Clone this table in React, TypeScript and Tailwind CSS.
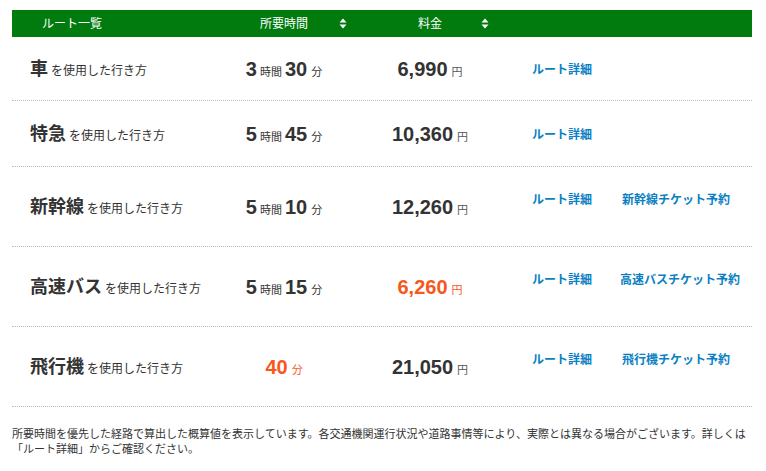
import React from "react";

type Route = {
  id: number;
  name: string;
  hours?: number;
  minutes: number;
  price: string;
  fastest?: boolean;
  cheapest?: boolean;
  ticket?: string;
  height: string;
};

const routes: Route[] = [
  { id: 1, name: "車", hours: 3, minutes: 30, price: "6,990", height: "h-[64px]" },
  { id: 2, name: "特急", hours: 5, minutes: 45, price: "10,360", height: "h-[66px]" },
  { id: 3, name: "新幹線", hours: 5, minutes: 10, price: "12,260", ticket: "新幹線チケット予約", height: "h-[80px]" },
  { id: 4, name: "高速バス", hours: 5, minutes: 15, price: "6,260", cheapest: true, ticket: "高速バスチケット予約", height: "h-[80px]" },
  { id: 5, name: "飛行機", minutes: 40, price: "21,050", fastest: true, ticket: "飛行機チケット予約", height: "h-[80px]" },
];

const SortIcon = () => (
  <svg width="8" height="11" viewBox="0 0 8 11" fill="white">
    <path d="M4 0.5 L7.5 4.5 L0.5 4.5 Z" />
    <path d="M0.5 6.5 L7.5 6.5 L4 10.5 Z" />
  </svg>
);

const App = () => {
  return (
    <div
      className="w-[766px] h-[471px] bg-white text-[#333] pt-[10px] px-[12px]"
      style={{ fontFamily: '"Liberation Sans", "Noto Sans CJK JP", sans-serif' }}
    >
      <div className="w-[740px]">
        <div className="grid grid-cols-[200px_144px_148px_116px_112px_20px] h-[27px] bg-[#017a0e] text-white text-[12px] leading-none items-center">
          <div className="pl-[30px]">ルート一覧</div>
          <div className="relative flex justify-center items-center h-full">
            <span>所要時間</span>
            <span className="absolute left-[127px] top-[8px]">
              <SortIcon />
            </span>
          </div>
          <div className="relative flex justify-center items-center h-full">
            <span>料金</span>
            <span className="absolute left-[125px] top-[8px]">
              <SortIcon />
            </span>
          </div>
          <div />
          <div />
          <div />
        </div>

        {routes.map((r) => (
          <div
            key={r.id}
            className={`grid grid-cols-[200px_144px_148px_116px_112px_20px] items-center border-b border-dotted border-[#bbb] ${r.height}`}
          >
            <div className="pl-[18px] flex items-baseline">
              <span className="text-[18px] font-bold leading-none">{r.name}</span>
              <span className="text-[12px] ml-[3px] leading-none">を使用した行き方</span>
            </div>

            <div className={`flex justify-center items-baseline leading-none ${r.fastest ? "text-[#f6581c]" : ""}`}>
              {r.hours !== undefined && (
                <>
                  <span className="text-[20px] font-bold">{r.hours}</span>
                  <span className="text-[11px] ml-[3px] mr-[3px]">時間</span>
                </>
              )}
              <span className="text-[20px] font-bold">{r.minutes}</span>
              <span className="text-[11px] ml-[4px]">分</span>
            </div>

            <div className={`flex justify-center items-baseline leading-none ${r.cheapest ? "text-[#f6581c]" : ""}`}>
              <span className="text-[20px] font-bold">{r.price}</span>
              <span className={`text-[11px] ml-[4px] ${r.cheapest ? "" : "text-[#555]"}`}>円</span>
            </div>

            <div className={`text-center ${r.ticket ? "mb-[16px]" : ""}`}>
              <a href="#" className="text-[12px] font-bold text-[#0b7fc3] leading-none">
                ルート詳細
              </a>
            </div>
            <div className={`text-center ${r.ticket ? "mb-[16px]" : ""}`}>
              {r.ticket && (
                <a href="#" className="text-[12px] font-bold text-[#0b7fc3] leading-none whitespace-nowrap">
                  {r.ticket}
                </a>
              )}
            </div>
            <div />
          </div>
        ))}
      </div>

      <p className="mt-[20px] text-[11px] leading-[15px] text-[#333]">
        所要時間を優先した経路で算出した概算値を表示しています。各交通機関運行状況や道路事情等により、実際とは異なる場合がございます。詳しくは「ルート詳細」からご確認ください。
      </p>
    </div>
  );
};

export default App;
